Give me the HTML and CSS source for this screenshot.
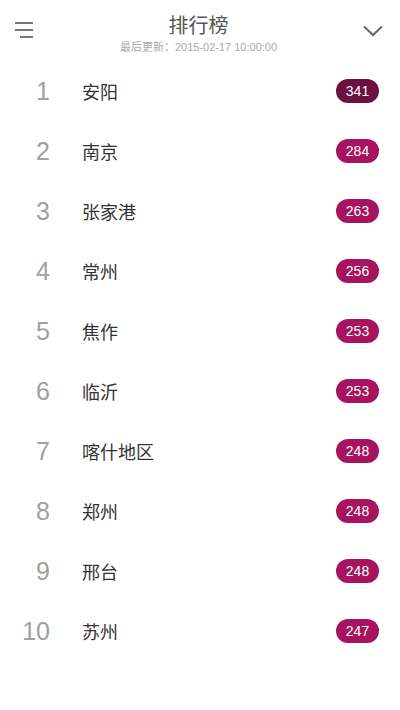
FILE: index.html
```html
<!DOCTYPE html>
<html lang="zh-CN">
<head>
    <meta charset="UTF-8">
    <title>排行榜</title>
    <link rel="stylesheet" href="styles.css">
</head>
<body>
    <div class="header">
        <div class="menuBtn">
            <svg width="20" height="18" viewBox="0 0 20 18">
                <path d="M0 2H18M0 9H18M5 16H18" stroke="#777" stroke-width="2" fill="none"/>
            </svg>
        </div>
        <div class="titleBox">
            <div class="title">排行榜</div>
            <div class="subtitle">最后更新：2015-02-17 10:00:00</div>
        </div>
        <div class="moreBtn">
            <svg width="22" height="12" viewBox="0 0 22 12">
                <path d="M2 1.5L11 10L20 1.5" stroke="#666" stroke-width="2" fill="none"/>
            </svg>
        </div>
    </div>

    <ul class="rankList">
        <li class="rankRow">
            <span class="rankNo">1</span><span class="city">安阳</span><span class="score top">341</span>
        </li>
        <li class="rankRow">
            <span class="rankNo">2</span><span class="city">南京</span><span class="score">284</span>
        </li>
        <li class="rankRow">
            <span class="rankNo">3</span><span class="city">张家港</span><span class="score">263</span>
        </li>
        <li class="rankRow">
            <span class="rankNo">4</span><span class="city">常州</span><span class="score">256</span>
        </li>
        <li class="rankRow">
            <span class="rankNo">5</span><span class="city">焦作</span><span class="score">253</span>
        </li>
        <li class="rankRow">
            <span class="rankNo">6</span><span class="city">临沂</span><span class="score">253</span>
        </li>
        <li class="rankRow">
            <span class="rankNo">7</span><span class="city">喀什地区</span><span class="score">248</span>
        </li>
        <li class="rankRow">
            <span class="rankNo">8</span><span class="city">郑州</span><span class="score">248</span>
        </li>
        <li class="rankRow">
            <span class="rankNo">9</span><span class="city">邢台</span><span class="score">248</span>
        </li>
        <li class="rankRow">
            <span class="rankNo">10</span><span class="city">苏州</span><span class="score">247</span>
        </li>
    </ul>
</body>
</html>
```

FILE: styles.css
```css
body {
    margin: 0;
    padding: 0;
    background-color: #fff;
    font-family: "Liberation Sans", "Noto Sans CJK SC", sans-serif;
    color: #333;
}

.header {
    height: 61px;
    display: flex;
    align-items: flex-start;
    justify-content: space-between;
    padding: 0 15px;
}

.menuBtn {
    padding-top: 21px;
}

.menuBtn svg,
.moreBtn svg {
    display: block;
}

.moreBtn {
    padding-top: 25px;
    padding-right: 1px;
}

.titleBox {
    text-align: center;
    padding-top: 13px;
}

.title {
    font-size: 20px;
    line-height: 26px;
    color: #555;
}

.subtitle {
    margin-top: 1px;
    font-size: 11px;
    line-height: 14px;
    color: #aaa;
}

.rankList {
    list-style: none;
    margin: 0;
    padding: 0;
}

.rankRow {
    height: 60px;
    display: flex;
    align-items: center;
    padding-right: 21px;
}

.rankNo {
    width: 50px;
    text-align: right;
    font-size: 25px;
    color: #a0a0a0;
}

.city {
    flex: 1;
    margin-left: 32px;
    font-size: 18px;
    color: #333;
}

.score {
    width: 43px;
    height: 24px;
    line-height: 24px;
    border-radius: 12px;
    text-align: center;
    font-size: 14px;
    color: #fff;
    background-color: #a8135f;
}

.score.top {
    background-color: #6c0f41;
}
```
